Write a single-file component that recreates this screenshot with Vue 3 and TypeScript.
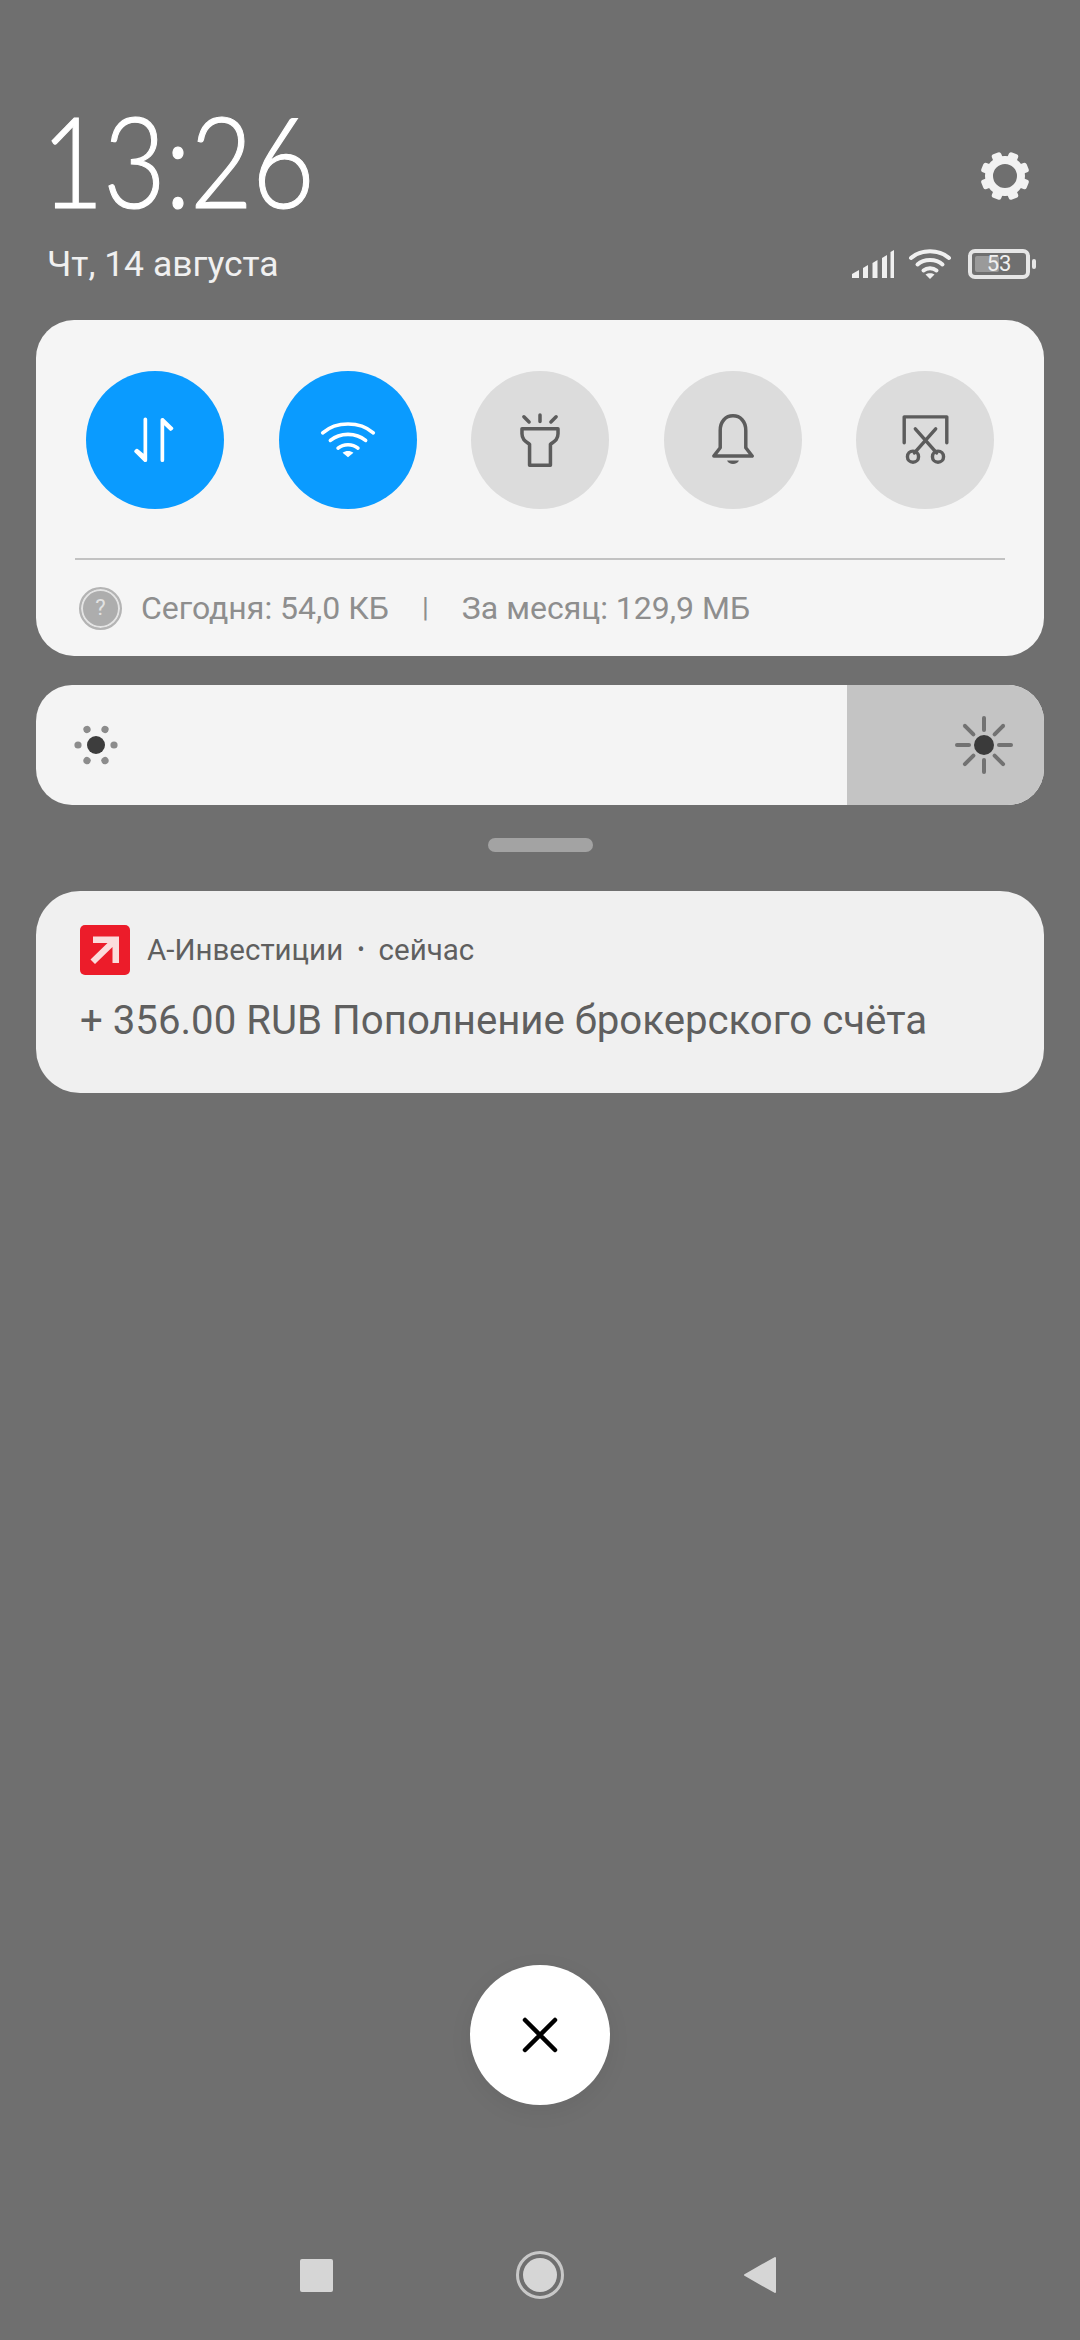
<script setup lang="ts">
// Quick-settings shade: clock header, toggles, brightness, one notification, nav bar
const rays = [0, 45, 90, 135, 180, 225, 270, 315]
const teeth = [22.5, 67.5, 112.5, 157.5, 202.5, 247.5, 292.5, 337.5]
const dots = [30, 90, 150, 210, 270, 330]
const bars = [
  { x: 0, y: 22, h: 7 }, { x: 11, y: 16, h: 13 }, { x: 20.5, y: 11, h: 18 },
  { x: 30, y: 6, h: 23 }, { x: 38.5, y: 0, h: 29 },
]
</script>

<template>
  <div class="shade">
    <header class="head">
      <div class="clock-row">
        <div class="clock">13:26</div>
        <svg class="gear" width="50" height="50" viewBox="-25 -25 50 50">
          <circle r="16" fill="none" stroke="#f2f2f2" stroke-width="8" />
          <rect v-for="a in teeth" :key="a" x="-5" y="-24.5" width="10" height="10" rx="2.5"
                fill="#f2f2f2" :transform="`rotate(${a})`" />
        </svg>
      </div>
      <div class="date-row">
        <div class="date">Чт, 14 августа</div>
        <div class="status">
          <svg width="42" height="30" viewBox="0 0 42 30">
            <path v-for="b in bars" :key="b.x" fill="#f0f0f0"
                  :d="b.x === 0
                    ? 'M0 29 V25 L7 21 V29 Z'
                    : `M${b.x} ${b.y + 3} L${b.x + 5} ${b.y} V29 H${b.x} Z`" />
          </svg>
          <svg width="44" height="32" viewBox="0 0 44 32" fill="none" stroke="#f0f0f0"
               stroke-width="4" stroke-linecap="round">
            <path d="M3 10 C13 1 31 1 41 10" />
            <path d="M9.5 16.5 C16 10.5 28 10.5 34.5 16.5" />
            <path d="M15.5 22.5 C19 19.5 25 19.5 28.5 22.5" />
            <path d="M22 31 L17.5 26.5 C20 24.8 24 24.8 26.5 26.5 Z" fill="#f0f0f0" stroke="none" />
          </svg>
          <div class="battery">
            <span class="level"></span>
            <span class="pct">53</span>
          </div>
          <span class="nub"></span>
        </div>
      </div>
    </header>

    <section class="panel">
      <div class="toggles">
        <div class="tg on">
          <svg width="46" height="46" viewBox="0 0 50 50" fill="#fff">
            <path d="M12.5 2.5 a2 2 0 0 1 4 0 V47 a2 2 0 0 1 -2 2 h-1 L2.5 38 a1.6 1.6 0 0 1 .2 -1.5 l1.6 -1.6 a1.6 1.6 0 0 1 2 0 L12.5 40 Z" />
            <path d="M31 3 a2 2 0 0 1 2 -2 h1 l10.6 10.3 a1.6 1.6 0 0 1 -.2 2.2 l-1.4 1.3 a1.6 1.6 0 0 1 -2 0 L35 9 V47 a2 2 0 0 1 -4 0 Z" />
          </svg>
        </div>
        <div class="tg on">
          <svg width="56" height="40" viewBox="0 0 62 44" fill="none" stroke="#fff"
               stroke-width="4" stroke-linecap="round">
            <path d="M3 14 C18 1 44 1 59 14" />
            <path d="M11.5 22.5 C22 13.5 40 13.5 50.5 22.5" />
            <path d="M20 31 C26 26 36 26 42 31" />
            <path d="M31 41 L25 36 C28.5 33.5 33.5 33.5 37 36 Z" fill="#fff" stroke="none" />
          </svg>
        </div>
        <div class="tg">
          <svg width="42" height="55" viewBox="0 0 44 58" fill="none" stroke="#5c5c5c"
               stroke-width="3.7" stroke-linecap="round" stroke-linejoin="round">
            <path d="M22 2 V9 M5 4 L10.5 9.5 M39 4 L33.5 9.5" />
            <path d="M3 16.5 H41 V22 C41 28 37 30 33 33 V55 H11 V33 C7 30 3 28 3 22 Z" />
          </svg>
        </div>
        <div class="tg">
          <svg width="42" height="53" viewBox="0 0 46 58" fill="none" stroke="#5c5c5c"
               stroke-width="3.8" stroke-linecap="round" stroke-linejoin="round">
            <path d="M9 37 V18 C9 8 15 2 23 2 C31 2 37 8 37 18 V37 L44 46 H2 Z" />
            <path d="M16.5 51 H29.5 C28 56 18 56 16.5 51 Z" fill="#5c5c5c" stroke="none" />
          </svg>
        </div>
        <div class="tg">
          <svg width="49" height="50" viewBox="0 0 50 54" fill="none" stroke="#5c5c5c"
               stroke-width="3.7" stroke-linecap="round" stroke-linejoin="round">
            <path d="M2 30 V2 H48 V30" />
            <path d="M14 15 L37 41 M36 15 L13 41" />
            <circle cx="11.5" cy="45" r="6" />
            <circle cx="38.5" cy="45" r="6" />
          </svg>
        </div>
      </div>
      <div class="divider"></div>
      <div class="usage">
        <div class="help"><span>?</span></div>
        <span>Сегодня: 54,0 КБ</span>
        <span class="sep">|</span>
        <span>За месяц: 129,9 МБ</span>
      </div>
    </section>

    <section class="bright">
      <svg class="sun-s" width="44" height="44" viewBox="-22 -22 44 44">
        <circle r="9" fill="#3d3d3d" />
        <circle v-for="a in dots" :key="a" cy="-18" r="3.6" fill="#8c8c8c" :transform="`rotate(${a})`" />
      </svg>
      <div class="bright-fill">
        <svg width="60" height="60" viewBox="-30 -30 60 60">
          <circle r="10" fill="#3a3a3a" />
          <line v-for="a in rays" :key="a" y1="-15" y2="-27" stroke="#727272" stroke-width="4"
                stroke-linecap="round" :transform="`rotate(${a})`" />
        </svg>
      </div>
    </section>

    <div class="handle"></div>

    <section class="note">
      <div class="note-head">
        <svg class="app" width="50" height="50" viewBox="0 0 50 50">
          <rect width="50" height="50" rx="5" fill="#ec1c2a" />
          <path d="M13 11.5 H39 V38 H32.5 V22 L15 39 L10.5 34.5 L27.5 18 H13 Z" fill="#fbdcdc" />
        </svg>
        <span>А-Инвестиции</span>
        <span class="dot">•</span>
        <span>сейчас</span>
      </div>
      <div class="note-body">+ 356.00 RUB Пополнение брокерского счёта</div>
    </section>

    <div class="spacer"></div>

    <button class="close" type="button">
      <svg width="36" height="36" viewBox="0 0 36 36" stroke="#000" stroke-width="4.5" stroke-linecap="round">
        <path d="M3 3 L33 33 M33 3 L3 33" />
      </svg>
    </button>

    <nav class="nav">
      <span class="square"></span>
      <span class="home"><i></i></span>
      <svg width="34" height="38" viewBox="0 0 34 38">
        <path d="M32 2 V36 L2 19 Z" fill="#d6d6d6" stroke="#d6d6d6" stroke-width="2" stroke-linejoin="round" />
      </svg>
    </nav>
  </div>
</template>

<style>
html, body { margin: 0; background: #6f6f6f; }
</style>

<style scoped>
.shade {
  width: 1080px; height: 2340px; box-sizing: border-box; overflow: hidden;
  display: flex; flex-direction: column; padding: 0 36px;
  background: #6f6f6f; font-family: Roboto, "Noto Sans", sans-serif;
}

.head { padding-top: 101px; height: 320px; box-sizing: border-box; }
.clock-row { display: flex; justify-content: space-between; align-items: center; padding: 0 14px 0 5px; height: 118px; }
.clock {
  font-family: Lato, sans-serif; font-weight: 300; font-size: 126px; line-height: 118px;
  color: #fff; letter-spacing: -1px; transform: scaleX(.86); transform-origin: left center;
  -webkit-text-stroke: 1.2px #fff;
}
.gear { margin-top: 32px; }
.date-row { display: flex; justify-content: space-between; align-items: center; padding-left: 11px; margin-top: 23px; }
.date { font-size: 35.5px; line-height: 44px; color: #f0f0f0; }
.status { display: flex; align-items: center; gap: 14px; margin-right: 8px; }
.battery {
  position: relative; width: 62px; height: 30px; box-sizing: border-box;
  border: 4px solid #e6e6e6; border-radius: 7px; margin-left: 2px;
  display: flex; align-items: center; justify-content: center;
}
.level { position: absolute; left: 3px; top: 3px; bottom: 3px; width: 24px; background: #9a9a9a; border-radius: 2px; }
.pct { position: relative; font-size: 22px; line-height: 22px; color: #f0f0f0; }
.nub { width: 4px; height: 10px; background: #e6e6e6; border-radius: 2px; margin-left: -12px; }

.panel {
  height: 336px; box-sizing: border-box; padding: 51px 39px 0;
  background: #f5f5f5; border-radius: 38px;
  display: flex; flex-direction: column;
}
.toggles { display: flex; justify-content: space-between; padding: 0 11px; }
.tg {
  width: 138px; height: 138px; border-radius: 50%; background: #dcdcdc;
  display: flex; align-items: center; justify-content: center;
}
.tg.on { background: #0a9bff; }
.divider { height: 2px; background: #c2c2c2; margin-top: 49px; }
.usage {
  display: flex; align-items: center; margin-top: 26px; padding-left: 4px;
  font-size: 32px; line-height: 44px; color: #8e8e8e;
}
.help {
  width: 43px; height: 43px; box-sizing: border-box; border-radius: 50%;
  border: 2px solid #b4b4b4; background: #adadad; box-shadow: inset 0 0 0 2px #e4e4e4;
  display: flex; align-items: center; justify-content: center; margin-right: 19px;
}
.help span { font-size: 22px; color: #e2e2e2; }
.sep { margin: 0 33px 0 33px; font-size: 28px; }

.bright {
  height: 120px; margin-top: 29px; background: #f4f4f4; border-radius: 36px;
  display: flex; align-items: center; justify-content: space-between; overflow: hidden;
}
.sun-s { margin-left: 38px; }
.bright-fill {
  width: 197px; height: 100%; background: #c4c4c4;
  display: flex; align-items: center; justify-content: flex-end; padding-right: 30px; box-sizing: border-box;
}

.handle { width: 105px; height: 14px; margin: 33px auto 0; border-radius: 7px; background: #a3a3a3; }

.note {
  height: 202px; box-sizing: border-box; margin-top: 39px; padding: 34px 44px 0;
  background: #f0f0f0; border-radius: 44px; color: #5f5f5f;
}
.note-head { display: flex; align-items: center; gap: 17px; font-size: 29.5px; line-height: 50px; }
.note-head .dot { margin: 0 -3px; font-size: 22px; }
.app { flex: none; }
.note-body { font-size: 40.2px; line-height: 48px; margin-top: 22px; white-space: nowrap; }

.spacer { flex: 1; }
.close {
  width: 140px; height: 140px; margin: 0 auto; padding: 0; border: 0; border-radius: 50%;
  background: #fff; box-shadow: 0 6px 24px rgba(0, 0, 0, 0.06);
  display: flex; align-items: center; justify-content: center;
}
.nav { display: flex; justify-content: space-between; align-items: center; height: 52px; margin: 144px 0 39px; padding: 0 267px 0 264px; }
.square { width: 33px; height: 33px; background: #d6d6d6; border-radius: 2px; }
.home {
  width: 48px; height: 48px; box-sizing: border-box; border-radius: 50%; border: 3px solid #c8c8c8;
  margin-left: 3px;
  display: flex; align-items: center; justify-content: center;
}
.home i { width: 34px; height: 34px; border-radius: 50%; background: #d6d6d6; }
</style>
